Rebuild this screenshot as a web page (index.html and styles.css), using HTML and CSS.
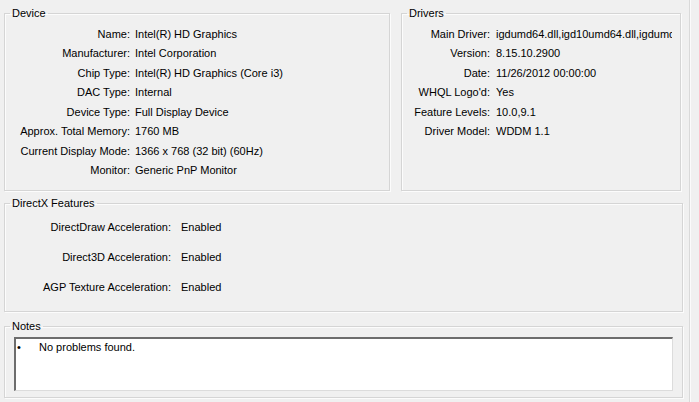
FILE: index.html
```html
<!DOCTYPE html>
<html lang="en">

<head>
    <meta charset="utf-8">
    <meta name="viewport" content="width=device-width, initial-scale=1.0">
    <title>DirectX Diagnostic Tool - Display</title>

    <link rel="stylesheet" href="styles.css">
</head>

<body>
    <div class="tab">

        <div class="top">
            <fieldset class="group">
                <legend>Device</legend>
                <div class="rows device">
                    <span class="lbl">Name:</span><span class="val">Intel(R) HD Graphics</span>
                    <span class="lbl">Manufacturer:</span><span class="val">Intel Corporation</span>
                    <span class="lbl">Chip Type:</span><span class="val">Intel(R) HD Graphics (Core i3)</span>
                    <span class="lbl">DAC Type:</span><span class="val">Internal</span>
                    <span class="lbl">Device Type:</span><span class="val">Full Display Device</span>
                    <span class="lbl">Approx. Total Memory:</span><span class="val">1760 MB</span>
                    <span class="lbl">Current Display Mode:</span><span class="val">1366 x 768 (32 bit) (60Hz)</span>
                    <span class="lbl">Monitor:</span><span class="val">Generic PnP Monitor</span>
                </div>
            </fieldset>

            <fieldset class="group">
                <legend>Drivers</legend>
                <div class="rows drivers">
                    <span class="lbl">Main Driver:</span><span class="val">igdumd64.dll,igd10umd64.dll,igdumdx32.dll</span>
                    <span class="lbl">Version:</span><span class="val">8.15.10.2900</span>
                    <span class="lbl">Date:</span><span class="val">11/26/2012 00:00:00</span>
                    <span class="lbl">WHQL Logo'd:</span><span class="val">Yes</span>
                    <span class="lbl">Feature Levels:</span><span class="val">10.0,9.1</span>
                    <span class="lbl">Driver Model:</span><span class="val">WDDM 1.1</span>
                </div>
            </fieldset>
        </div>

        <fieldset class="group features">
            <legend>DirectX Features</legend>
            <div class="rows dx">
                <span class="lbl">DirectDraw Acceleration:</span><span class="val">Enabled</span>
                <span class="lbl">Direct3D Acceleration:</span><span class="val">Enabled</span>
                <span class="lbl">AGP Texture Acceleration:</span><span class="val">Enabled</span>
            </div>
        </fieldset>

        <fieldset class="group notes">
            <legend>Notes</legend>
            <div class="notebox">
                <div class="note"><span class="bullet">&bull;</span>No problems found.</div>
            </div>
        </fieldset>

    </div>
</body>

</html>
```

FILE: styles.css
```css
body {
    margin: 0;
    background: #f0f0f0;
    font-family: "Liberation Sans", Arial, sans-serif;
    font-size: 11px;
    color: #000;
}

.tab {
    width: 685px;
    height: 402px;
    padding-left: 4px;
    border-right: 1px solid #d9d9d9;
    box-shadow: 1px 0 #fbfbfb;
    overflow: hidden;
}

.group {
    margin: 0;
    padding: 0;
    min-width: 0;
    border: 1px solid #d5d5d5;
    box-shadow: inset 1px 1px #fcfcfc, 1px 1px #fcfcfc;
}

.group legend {
    margin-left: 5px;
    padding: 0 2px;
    line-height: 13px;
}

.top {
    display: grid;
    grid-template-columns: 386px 280px;
    column-gap: 11px;
    margin-top: 7px;
}

.rows {
    display: grid;
    align-items: center;
    white-space: nowrap;
}

.lbl {
    text-align: right;
}

.val {
    overflow: hidden;
}

.device {
    grid-template-columns: 125px 1fr;
    grid-auto-rows: 19.5px;
    column-gap: 5px;
    padding: 4px 0 10px;
}

.drivers {
    grid-template-columns: 88px 176px;
    grid-auto-rows: 19.5px;
    column-gap: 6px;
    padding: 4px 0 10px;
}

.features {
    width: 677px;
    margin-top: 6px;
}

.dx {
    grid-template-columns: 166px 1fr;
    grid-auto-rows: 30px;
    column-gap: 10px;
    padding: 2px 0 9px;
}

.notes {
    width: 677px;
    margin-top: 8px;
}

.notebox {
    height: 54px;
    margin: 4px 9px 6px;
    background: #fff;
    border-top: 2px solid #6d6d6d;
    border-left: 2px solid #6d6d6d;
    border-right: 1px solid #dcdcdc;
    border-bottom: 1px solid #dcdcdc;
    box-sizing: border-box;
}

.note {
    padding: 1px 0 0 1px;
    line-height: 14px;
}

.bullet {
    display: inline-block;
    width: 22px;
}
```
